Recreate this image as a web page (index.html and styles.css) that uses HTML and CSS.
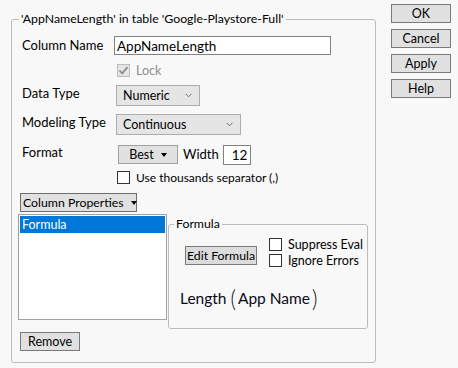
FILE: index.html
```html
<!DOCTYPE html>
<html>
<head>
<meta charset="utf-8">
<link rel="stylesheet" href="styles.css">
</head>
<body>
<div class="dialog">
  <fieldset class="group">
    <legend class="group-title">'AppNameLength' in table 'Google-Playstore-Full'</legend>

    <div class="row row-name">
      <span class="label">Column Name</span>
      <span class="textbox name-box">AppNameLength</span>
    </div>

    <div class="row row-lock">
      <span class="check disabled"><svg viewBox="0 0 13 13" width="13" height="13"><polyline points="2.5,6.5 5.2,9.3 10.5,3.2" fill="none" stroke="#8c8c8c" stroke-width="1.8"/></svg></span>
      <span class="check-label muted">Lock</span>
    </div>

    <div class="row row-dtype">
      <span class="label">Data Type</span>
      <span class="combo combo-dtype">Numeric<svg class="chev" viewBox="0 0 7 5" width="7" height="5"><polyline points="0.5,0.8 3.5,3.8 6.5,0.8" fill="none" stroke="#6e6e6e" stroke-width="1"/></svg></span>
    </div>

    <div class="row row-mtype">
      <span class="label">Modeling Type</span>
      <span class="combo combo-mtype">Continuous<svg class="chev" viewBox="0 0 7 5" width="7" height="5"><polyline points="0.5,0.8 3.5,3.8 6.5,0.8" fill="none" stroke="#6e6e6e" stroke-width="1"/></svg></span>
    </div>

    <div class="row row-format">
      <span class="label">Format</span>
      <span class="btn menu-btn best-btn">Best<span class="tri"></span></span>
      <span class="width-label">Width</span>
      <span class="textbox width-box">12</span>
    </div>

    <div class="row row-sep">
      <span class="check"></span>
      <span class="check-label">Use thousands separator (,)</span>
    </div>

    <div class="row row-props">
      <span class="btn menu-btn props-btn">Column Properties<span class="tri"></span></span>
    </div>

    <div class="props-area">
      <div class="listbox">
        <div class="list-item selected">Formula</div>
      </div>
      <fieldset class="subgroup">
        <legend class="subgroup-title">Formula</legend>
        <div class="formula-top">
          <span class="btn edit-btn">Edit Formula</span>
          <div class="formula-checks">
            <div class="small-check"><span class="check"></span><span class="check-label">Suppress Eval</span></div>
            <div class="small-check"><span class="check"></span><span class="check-label">Ignore Errors</span></div>
          </div>
        </div>
        <div class="formula-expr">Length<span class="paren lp">(</span>App Name<span class="paren rp">)</span></div>
      </fieldset>
    </div>

    <div class="row row-remove">
      <span class="btn remove-btn">Remove</span>
    </div>
  </fieldset>

  <div class="actions">
    <span class="btn action-btn">OK</span>
    <span class="btn action-btn">Cancel</span>
    <span class="btn action-btn">Apply</span>
    <span class="btn action-btn">Help</span>
  </div>
</div>
</body>
</html>
```

FILE: styles.css
```css
html, body {
  margin: 0;
  padding: 0;
  background: #f8f8f8;
}

body {
  font-family: Lato, "Noto Sans", sans-serif;
  font-size: 12px;
  color: #000;
  width: 458px;
  height: 368px;
  overflow: hidden;
}

.dialog {
  display: flex;
  align-items: flex-start;
  padding: 4px 0 0 11px;
}

.group {
  margin: 7px 0 0 0;
  width: 365px;
  box-sizing: border-box;
  border: 1px solid #bcbcbc;
  border-radius: 3px;
  padding: 9px 0 11px 10px;
  min-width: 0;
}

.group-title {
  height: 16px;
  line-height: 16px;
  padding: 0 2px;
  margin-left: -3px;
  white-space: nowrap;
  font-size: 12.3px;
}

.row {
  display: flex;
  align-items: center;
}

.label {
  width: 92px;
  flex: none;
  font-size: 13px;
}

.textbox {
  box-sizing: border-box;
  background: #fff;
  border: 1px solid #828282;
  display: flex;
  align-items: center;
  line-height: 16px;
}

.row-name { height: 19px; }
.row-name .label { align-self: flex-start; line-height: 17px; margin-top: 1px; }
.name-box {
  width: 217px;
  height: 19px;
  padding-left: 2px;
  font-size: 13.5px;
}

.check {
  box-sizing: border-box;
  width: 13px;
  height: 13px;
  border: 1px solid #333;
  background: #fff;
  display: inline-block;
  flex: none;
}
.check.disabled {
  border-color: #bcbcbc;
  background: #e6e6e6;
}
.check.disabled svg { display: block; margin: -1px; }

.check-label {
  margin-left: 6px;
  line-height: 13px;
}
.muted { color: #8d8d8d; font-size: 12.5px; }

.row-lock {
  margin-top: 9px;
  height: 13px;
  padding-left: 95px;
}

.combo {
  box-sizing: border-box;
  height: 21px;
  background: #e5e5e5;
  border: 1px solid #adadad;
  display: flex;
  align-items: center;
  padding-left: 6px;
  position: relative;
  margin-left: 2px;
  font-size: 12.5px;
}
.combo .chev {
  position: absolute;
  right: 7px;
  top: 7px;
}
.combo-dtype { width: 84px; }
.combo-mtype { width: 125px; }

.row-dtype { margin-top: 8px; height: 21px; }
.row-dtype .label, .row-mtype .label { align-self: flex-start; line-height: 16px; }
.row-mtype { margin-top: 8px; height: 21px; }

.btn {
  box-sizing: border-box;
  background: #e1e1e1;
  border: 1px solid #8a8a8a;
  display: inline-flex;
  align-items: center;
  justify-content: center;
  height: 19px;
  white-space: nowrap;
}

.tri {
  width: 0;
  height: 0;
  border-left: 3.5px solid transparent;
  border-right: 3.5px solid transparent;
  border-top: 4px solid #000;
  margin-left: 7px;
}

.row-format { margin-top: 10px; height: 19px; align-items: flex-start; }
.row-format .label { line-height: 14px; }
.best-btn {
  margin-left: 4px;
  width: 60px;
  border-color: #a0a0a0;
  font-size: 12.5px;
}
.width-label { margin-left: 5px; line-height: 19px; font-size: 13px; }
.width-box {
  margin-left: 4px;
  width: 28px;
  height: 20px;
  padding-left: 8px;
  font-size: 13.5px;
}

.row-sep {
  margin-top: 7px;
  height: 13px;
  padding-left: 95px;
}

.row-props { margin-top: 9px; height: 19px; }
.props-btn {
  margin-left: -2px;
  width: 117px;
  border-color: #6e6e6e;
  justify-content: flex-start;
  padding-left: 2px;
  font-size: 12.3px;
}

.props-area {
  display: flex;
  align-items: flex-start;
  margin-top: 2px;
  margin-left: -4px;
}

.listbox {
  box-sizing: border-box;
  width: 149px;
  height: 106px;
  background: #fff;
  border: 1px solid #a0a0a0;
  padding: 1px;
}
.list-item {
  height: 17px;
  line-height: 17px;
  padding-left: 2px;
  font-size: 12.5px;
}
.list-item.selected {
  background: #0078d7;
  color: #fff;
}

.subgroup {
  box-sizing: border-box;
  margin: 2px 0 0 1px;
  width: 200px;
  height: 113px;
  border: 1px solid #bcbcbc;
  border-radius: 3px;
  padding: 6px 0 0 0;
  min-width: 0;
}
.subgroup-title {
  height: 16px;
  line-height: 16px;
  padding: 0 2px;
  margin-left: 5px;
  font-size: 12.3px;
}

.formula-top {
  display: flex;
  align-items: flex-start;
}
.edit-btn {
  margin: 8px 0 0 16px;
  height: 19px;
  width: 72px;
  background: #dcdcdc;
  border-color: #7a7a7a;
  font-size: 12.3px;
}
.formula-checks {
  margin-left: 12px;
  display: flex;
  flex-direction: column;
  gap: 3px;
}
.small-check {
  display: flex;
  align-items: center;
  height: 13px;
}
.small-check .check-label { margin-left: 6px; font-size: 12.5px; }

.formula-expr {
  margin: 19px 0 0 11px;
  font-size: 15.5px;
  color: #0a0a1a;
  display: flex;
  align-items: center;
  height: 24px;
}
.paren {
  font-size: 21px;
  font-weight: 300;
  line-height: 24px;
  transform: scaleY(1.15);
}
.lp { margin: 0 2px 0 4px; }
.rp { margin: 0 0 0 2px; }

.row-remove { margin-top: 3px; height: 19px; }
.remove-btn {
  margin-left: -2px;
  width: 60px;
  border-color: #7a7a7a;
  font-size: 12.5px;
}

.actions {
  margin-left: 15px;
  display: flex;
  flex-direction: column;
  gap: 6px;
}
.action-btn {
  width: 60px;
  height: 19px;
  border-color: #7a7a7a;
  font-size: 12.5px;
}
```
